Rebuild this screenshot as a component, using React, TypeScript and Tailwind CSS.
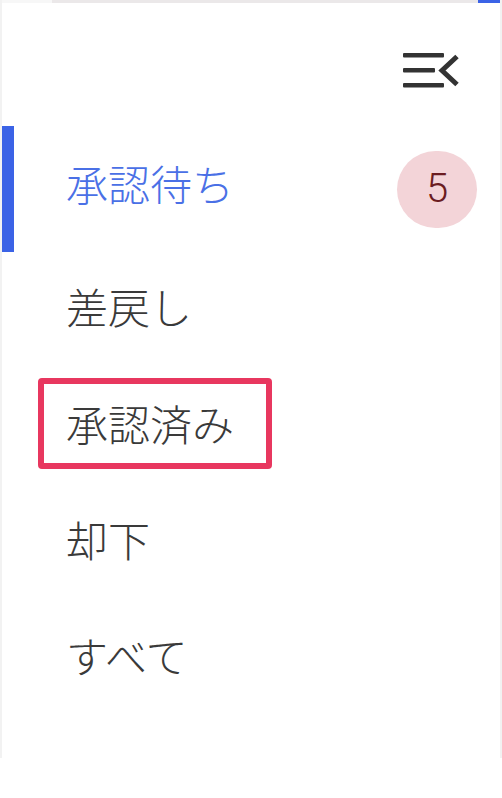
import React from "react";

type Item = { label: string; count?: number };

const items: Item[] = [
  { label: "承認待ち", count: 5 },
  { label: "差戻し" },
  { label: "承認済み" },
  { label: "却下" },
  { label: "すべて" },
];

const CollapseIcon: React.FC = () => (
  <svg width="60" height="40" viewBox="0 0 60 40" className="text-[#333]">
    <rect x="3" y="3" width="41" height="4.5" rx="1" fill="currentColor" />
    <rect x="3" y="18" width="32" height="4.5" rx="1" fill="currentColor" />
    <rect x="3" y="33" width="41" height="4.5" rx="1" fill="currentColor" />
    <polyline
      points="57,6.5 42,20.5 57,34.5"
      fill="none"
      stroke="currentColor"
      strokeWidth="5"
      strokeLinejoin="miter"
    />
  </svg>
);

const App: React.FC = () => {
  const active = 0;
  const focused = 2;
  // rows are not all the same height in this menu
  const heights = ["h-[126px]", "h-[120px]", "h-[114px]", "h-[118px]", "h-[114px]"];

  return (
    <div
      className="w-[502px] h-[798px] bg-white overflow-hidden"
      style={{ fontFamily: '"Noto Sans CJK JP", "Noto Sans", sans-serif' }}
    >
      <div className="h-[758px] border-l-2 border-r-2 border-[#f2f2f2] flex flex-col">
        {/* top strip */}
        <div className="flex h-[3px] shrink-0">
          <div className="w-[50px] bg-[#f7f7f7]" />
          <div className="flex-1 bg-[#ebe8e9]" />
          <div className="w-[22px] bg-[#3b63e6]" />
        </div>

        {/* collapse button */}
        <div className="flex justify-end pr-[40px] pt-[47px] h-[123px] shrink-0">
          <CollapseIcon />
        </div>

        <nav className="flex flex-col">
          {items.map((item, i) => (
            <div key={item.label} className={`relative flex items-center ${heights[i]}`}>
              {i === active && <div className="absolute left-0 top-0 bottom-0 w-[12px] bg-[#3b63e6]" />}
              <div className="flex-1 pl-[64px] pb-[12px] flex items-center">
                {i === focused ? (
                  <span className="-ml-[28px] h-[91px] w-[234px] border-[6px] border-[#e8375f] rounded-[4px] flex items-center pl-[22px] text-[42px] font-light leading-none text-[#3a3a3a]">
                    {item.label}
                  </span>
                ) : (
                  <span
                    className={`text-[42px] font-light leading-none ${i === active ? "text-[#4a70e6]" : "text-[#3a3a3a]"}`}
                  >
                    {item.label}
                  </span>
                )}
              </div>
              {item.count !== undefined && (
                <div
                  className="mr-[23px] w-[80px] h-[77px] rounded-full bg-[#f3d4d8] flex items-center justify-center text-[40px] font-light leading-none text-[#6b1c21]"
                  style={{ fontFamily: "Roboto, sans-serif" }}
                >
                  {item.count}
                </div>
              )}
            </div>
          ))}
        </nav>
      </div>
    </div>
  );
};

export default App;
